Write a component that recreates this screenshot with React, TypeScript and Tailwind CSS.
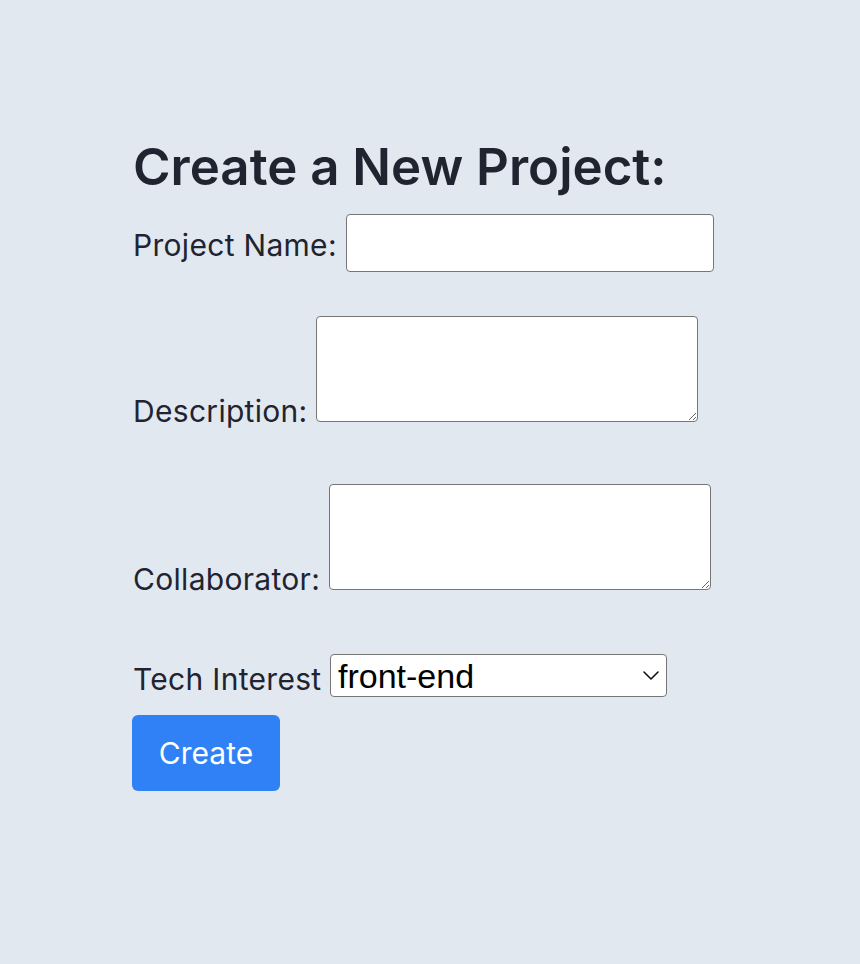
import React from "react";

export default function App() {
  const font = { fontFamily: "Inter, 'Noto Sans', sans-serif" };
  return (
    <div className="min-h-[964px] w-full bg-[#e2e8f0] text-[#1f2430]" style={font}>
      <div className="pl-[133px] pt-[141px]">
        <h1 className="text-[51px] leading-none font-semibold">Create a New Project:</h1>

        <div className="mt-[22px] flex items-end">
          <label className="w-[213px] shrink-0 text-[30px] leading-none tracking-[0.3px] mb-[12px]">Project Name:</label>
          <input
            type="text"
            className="h-[58px] w-[368px] rounded-[4px] border border-[#767676] bg-white outline-none"
          />
        </div>

        <div className="mt-[44px] flex items-end">
          <label className="w-[183px] shrink-0 text-[30px] leading-none tracking-[0.3px] mb-[-4px]">Description:</label>
          <textarea className="h-[106px] w-[382px] rounded-[4px] border border-[#767676] bg-white outline-none resize" />
        </div>

        <div className="mt-[62px] flex items-end">
          <label className="w-[196px] shrink-0 text-[30px] leading-none tracking-[0.3px] mb-[-4px]">Collaborator:</label>
          <textarea className="h-[106px] w-[382px] rounded-[4px] border border-[#767676] bg-white outline-none resize" />
        </div>

        <div className="mt-[64px] flex items-end">
          <label className="w-[197px] shrink-0 text-[30px] leading-none tracking-[0.3px] mb-[3px]">Tech Interest</label>
          <div className="relative h-[43px] w-[337px]">
            <select
              defaultValue="front-end"
              className="h-[43px] w-[337px] appearance-none rounded-[4px] border border-[#767676] bg-white pl-[7px] text-[34px] leading-none text-black outline-none"
              style={{ fontFamily: "'Liberation Sans', Arial, sans-serif" }}
            >
              <option value="front-end">front-end</option>
              <option value="back-end">back-end</option>
              <option value="full-stack">full-stack</option>
            </select>
            <svg
              className="pointer-events-none absolute left-[313px] top-[17px]"
              width="16"
              height="9"
              viewBox="0 0 16 9"
              fill="none"
            >
              <path d="M1 1L8 8L15 1" stroke="#111" strokeWidth="1.6" strokeLinecap="round" strokeLinejoin="round" />
            </svg>
          </div>
        </div>

        <button className="-ml-px mt-[18px] h-[76px] w-[148px] rounded-[6px] bg-[#3181f6] text-[30px] leading-none text-white">
          Create
        </button>
      </div>
    </div>
  );
}
